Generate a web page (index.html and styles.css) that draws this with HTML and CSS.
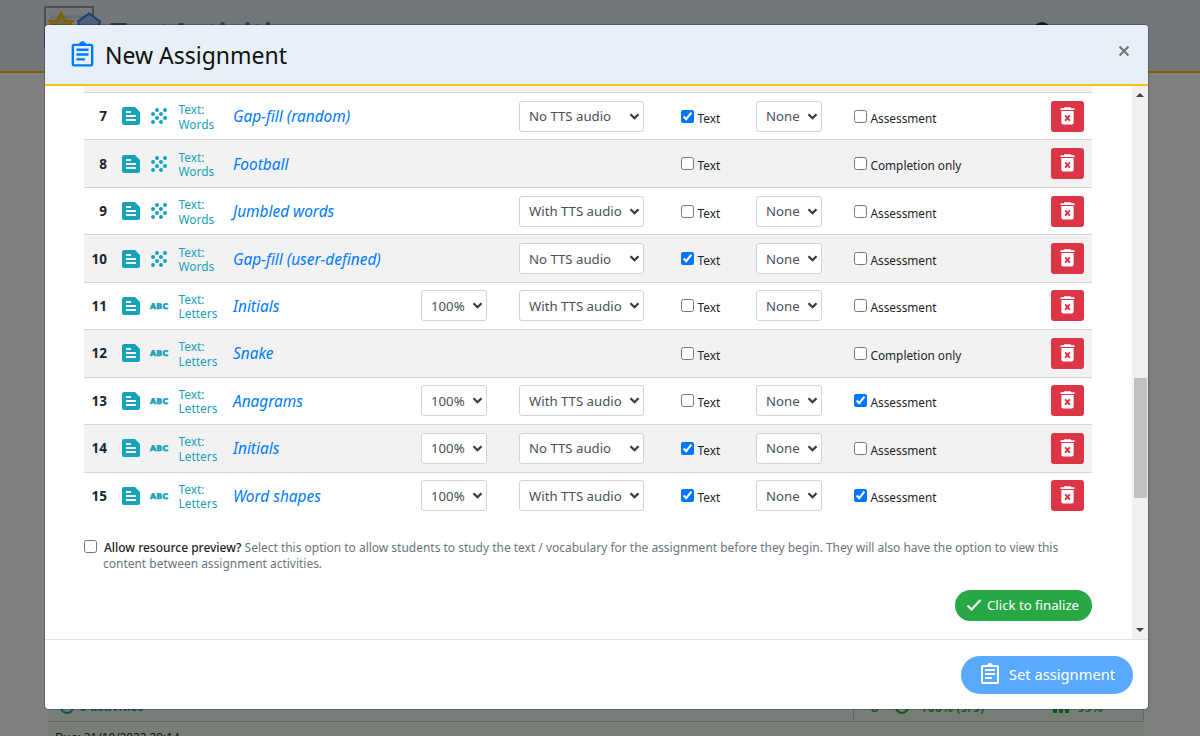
FILE: index.html
```html
<!DOCTYPE html>
<html lang="en">
<head>
  <meta charset="UTF-8">
  <meta name="viewport" content="width=device-width, initial-scale=1.0">
  <title>New Assignment</title>
  <link rel="stylesheet" href="styles.css">
</head>
<body>
  <svg class="sprite">
    <symbol id="clipboard" viewBox="0 0 24 24"><path d="M7 15h7v2H7zm0-4h10v2H7zm0-4h10v2H7zm12-4h-4.18C14.4 1.84 13.3 1 12 1s-2.4.84-2.82 2H5a2 2 0 0 0-2 2v15a2 2 0 0 0 2 2h14a2 2 0 0 0 2-2V5a2 2 0 0 0-2-2zm0 17H5V5h14z"/></symbol>
    <symbol id="feed" viewBox="0 0 24 24"><path d="M16 3H5a2 2 0 0 0-2 2v14a2 2 0 0 0 2 2h14a2 2 0 0 0 2-2V8zM7 7h5v2H7zm10 10H7v-2h10zm0-4H7v-2h10z"/></symbol>
    <symbol id="grain" viewBox="0 0 24 24"><path d="M10 12a2 2 0 1 0 0 4 2 2 0 0 0 0-4zM6 8a2 2 0 1 0 0 4 2 2 0 0 0 0-4zm0 8a2 2 0 1 0 0 4 2 2 0 0 0 0-4zm12-8a2 2 0 1 0 0-4 2 2 0 0 0 0 4zm-4 8a2 2 0 1 0 0 4 2 2 0 0 0 0-4zm4-4a2 2 0 1 0 0 4 2 2 0 0 0 0-4zm-4-4a2 2 0 1 0 0 4 2 2 0 0 0 0-4zm-4-4a2 2 0 1 0 0 4 2 2 0 0 0 0-4z"/></symbol>
    <symbol id="trash" viewBox="0 0 24 24"><path d="M15.500 1.500l1 1H20v2.200H4V2.500h3.500l1-1zM5 5.700h14V19a2 2 0 0 1-2 2H7a2 2 0 0 1-2-2zM10 10l-1.500 1.500 2 2.300-2 2.300 1.500 1.500 2-2.100 2 2.100 1.500-1.500-2-2.300 2-2.300L14 10l-2 2.100z"/></symbol>
  </svg>

  <div class="page">
    <header class="site-header">
      <div class="site-inner">
        <svg class="logo" viewBox="0 0 60 60">
          <rect x="1" y="1" width="48" height="40" fill="#fff" fill-opacity=".3" stroke="#9a9da1" stroke-width="2"/>
          <path d="M6 11h38" stroke="#c9daf0" stroke-width="3"/>
          <path d="M17 7l3.500 7.500 8 .8-6 5.500 1.600 8-7.100-4-7.100 4 1.600-8-6-5.500 8-.8z" fill="#e9cf80" stroke="#ffc107" stroke-width="2.500"/>
          <path d="M45 7.500l11 8-4 13H38l-4-13z" fill="#9cc4f0" stroke="#2f80dd" stroke-width="2"/>
        </svg>
        <span class="site-name">TextActivities</span>
        <span class="user-dot"></span>
      </div>
    </header>
    <div class="results">
      <div class="result-row">
        <span class="result-acts"><i class="ring"></i>9 activities</span>
        <span class="result-score"><b>8</b><i class="ring"></i><b>100% (9/9)</b><i class="bars"></i><b>99%</b></span>
      </div>
      <div class="result-due">Due: 21/10/2022 20:14</div>
    </div>
  </div>

  <div class="backdrop">
    <div class="modal">
      <div class="modal-header">
        <svg class="title-icon"><use href="#clipboard"/></svg>
        <h5>New Assignment</h5>
        <button class="close"><svg viewBox="0 0 12 12"><path d="M1.500 1.500l9 9m0-9l-9 9"/></svg></button>
      </div>
      <div class="modal-main">
        <div class="modal-body">
          <div class="row-tail"></div>
          <div id="activities"></div>
          <div class="preview">
            <input type="checkbox" id="allowPreview">
            <label for="allowPreview"><b>Allow resource preview?</b> Select this option to allow students to study the text / vocabulary for the assignment before they begin. They will also have the option to view this<br>content between assignment activities.</label>
          </div>
          <div class="finalize-row">
            <button class="finalize"><svg viewBox="0 0 16 14"><path d="M1.500 7.500l4 4L14.500 2"/></svg><span>Click to finalize</span></button>
          </div>
        </div>
        <div class="scrollbar">
          <i class="up"></i>
          <i class="thumb"></i>
          <i class="down"></i>
        </div>
      </div>
      <div class="modal-footer">
        <button class="set-btn"><svg><use href="#clipboard"/></svg><span>Set assignment</span></button>
      </div>
    </div>
  </div>

  <script>
    // number, level, name, percent, tts, text checked, assessment checked
    const activities = [
      [7, "Words", "Gap-fill (random)", "", "No TTS audio", true, false],
      [8, "Words", "Football", "", "", false, false],
      [9, "Words", "Jumbled words", "", "With TTS audio", false, false],
      [10, "Words", "Gap-fill (user-defined)", "", "No TTS audio", true, false],
      [11, "Letters", "Initials", "100%", "With TTS audio", false, false],
      [12, "Letters", "Snake", "", "", false, false],
      [13, "Letters", "Anagrams", "100%", "With TTS audio", false, true],
      [14, "Letters", "Initials", "100%", "No TTS audio", true, false],
      [15, "Letters", "Word shapes", "100%", "With TTS audio", true, true]
    ];

    function select(value, size) {
      if (!value) return "<span></span>";
      return `<span class="select ${size}"><select><option>${value}</option></select><svg viewBox="0 0 10 7"><path d="M1 1.200l4 4 4-4"/></svg></span>`;
    }

    function check(label, checked) {
      return `<label class="check"><input type="checkbox" ${checked ? "checked" : ""}><span>${label}</span></label>`;
    }

    document.getElementById("activities").innerHTML = activities.map(([n, level, name, pct, tts, text, assess]) => `
      <div class="activity">
        <b class="num">${n}</b>
        <svg class="icon"><use href="#feed"/></svg>
        ${level === "Words" ? '<svg class="icon"><use href="#grain"/></svg>' : '<span class="abc">ABC</span>'}
        <span class="level"><span>Text:</span><span>${level}</span></span>
        <a class="name">${name}</a>
        ${select(pct, "small")}
        ${select(tts, "wide")}
        ${check("Text", text)}
        ${select(tts ? "None" : "", "small")}
        ${check(tts ? "Assessment" : "Completion only", assess)}
        <button class="delete"><svg><use href="#trash"/></svg></button>
      </div>`).join("");
  </script>
</body>
</html>
```
FILE: styles.css
```css
* { box-sizing: border-box; }
body {
  margin: 0;
  height: 736px;
  overflow: hidden;
  font-family: "Noto Sans", "Open Sans", sans-serif;
  color: #212529;
  background: #fff;
}
button, select { font-family: inherit; }
.sprite { display: none; }

/* page behind the dialog */
.page {
  height: 736px;
  display: flex;
  flex-direction: column;
  justify-content: space-between;
}
.site-header {
  height: 73px;
  background: #e7eff7;
  border-bottom: 2px solid #ffc107;
}
.site-inner {
  display: flex;
  align-items: flex-start;
  padding: 6px 0 0 44px;
}
.logo { width: 60px; height: 60px; }
.site-name {
  margin: 7px 0 0 6px;
  width: 926px;
  font-size: 30px;
  font-weight: 600;
  color: #6c757d;
}
.user-dot {
  width: 18px;
  height: 18px;
  margin-top: 16px;
  margin-left: -3px;
  border-radius: 50%;
  background: #343a40;
}
.results {
  height: 46px;
  margin: 0 56px 0 48px;
  background: #ecfdec;
  font-size: 12.2px;
}
.result-row {
  display: flex;
  justify-content: space-between;
  height: 32px;
  border-bottom: 1px solid #c3d5c4;
  line-height: 34px;
}
.result-acts { padding-left: 12px; color: #17a2b8; font-weight: 600; }
.result-score {
  display: flex;
  align-items: center;
  width: 291px;
  padding: 2px 0 0 17px;
  border-left: 1px solid #c3d5c4;
  border-right: 1px solid #c3d5c4;
  color: #28a745;
}
.result-score .ring { margin: 0 11px 0 17px; }
.result-score b { font-size: 12.7px; font-weight: 600; }
.ring {
  display: inline-block;
  width: 14px;
  height: 14px;
  margin-right: 6px;
  border: 2px solid;
  border-radius: 50%;
  vertical-align: -3px;
}
.bars {
  width: 16px;
  height: 13px;
  margin: 0 8px 0 69px;
  background: repeating-linear-gradient(90deg, #28a745 0 4px, transparent 4px 6px);
}
.result-due { padding: 7px 7px 0; font-size: 11.8px; line-height: 16px; }

.backdrop {
  position: absolute;
  inset: 0;
  padding: 25px 52px 27px 44.5px;
  background: rgba(0, 0, 0, 0.5);
}
.modal {
  display: flex;
  flex-direction: column;
  height: 684px;
  background: #fff;
  border-radius: 4px;
  box-shadow: 0 0 0 1px rgba(0, 0, 0, 0.2);
  overflow: hidden;
}
.modal-header {
  display: flex;
  align-items: center;
  height: 61px;
  padding: 0 17px 0 23.5px;
  background: #e7eff7;
  border-bottom: 2px solid #ffc107;
}
.title-icon { width: 29px; height: 29px; fill: #007bff; }
.modal-header h5 {
  flex: 1;
  margin: 1px 0 0 8px;
  font-size: 23px;
  font-weight: 400;
  line-height: 30px;
  color: #111;
}
.close {
  width: 14px;
  height: 14px;
  margin-top: -7px;
  padding: 1px;
  border: 0;
  background: none;
}
.close svg { display: block; width: 12px; height: 12px; }
.close path { stroke: #74777b; stroke-width: 2.2; }

.modal-main { display: flex; height: 553px; }
.modal-body { flex: 1; padding: 0 40px 0 39.5px; }
.row-tail { height: 6px; background: #f2f2f2; }
.activity {
  display: grid;
  grid-template-columns: 23px 15px 28px 28.5px 54.5px 188px 98px 162px 75px 98px 197px 33px;
  align-items: center;
  height: 47.44px;
  border-top: 1px solid #d3d5d7;
}
.activity:nth-child(even) { background: #f2f2f2; }
.num { font-size: 13.5px; text-align: right; }
.icon:nth-of-type(1) { grid-column: 3; }
.icon { width: 24px; height: 24px; margin-left: -3px; fill: #17a2b8; }
.abc {
  padding-top: 1px;
  font: bold 7.8px "DejaVu Sans", sans-serif;
  letter-spacing: 0.2px;
  color: #17a2b8;
  -webkit-text-stroke: 0.6px #17a2b8;
}
.level {
  display: flex;
  flex-direction: column;
  padding-top: 1px;
  font-size: 11.9px;
  line-height: 14.5px;
  color: #17a2b8;
}
.name { padding-top: 1px; font-size: 15.4px; font-style: italic; color: #007bff; }
.select { position: relative; justify-self: start; height: 31px; }
.select select {
  appearance: none;
  width: 100%;
  height: 31px;
  padding: 0 0 0 9px;
  border: 1px solid #ced4da;
  border-radius: 3px;
  background: #fff;
  color: #495057;
  font-size: 13.2px;
}
.select.small { width: 66px; }
.select.wide { width: 125px; }
.select svg {
  position: absolute;
  right: 4px;
  top: 12px;
  width: 11px;
  height: 7px;
  fill: none;
  stroke: #343a40;
  stroke-width: 2.2;
}
.check { display: flex; align-items: center; font-size: 11.8px; }
.check input { margin: 0 3.5px 0 0; }
.check span { padding-top: 3px; }
.delete {
  width: 33px;
  height: 31px;
  padding: 5px 6px;
  border: 0;
  border-radius: 3px;
  background: #dc3545;
}
.delete svg { display: block; width: 21px; height: 21px; fill: #fff; }

.preview {
  display: flex;
  align-items: flex-start;
  margin-top: 21px;
  font-size: 12px;
  line-height: 16px;
}
.preview input { margin: 0 6px 0 0; }
.preview label { color: #6c757d; letter-spacing: -0.015px; white-space: nowrap; }
.preview b { margin-left: 1px; font-weight: 500; color: #212529; }
.finalize-row { display: flex; justify-content: flex-end; margin-top: 18px; }
.finalize {
  display: flex;
  align-items: center;
  width: 137px;
  height: 31px;
  padding: 0 0 0 11px;
  border: 0;
  border-radius: 16px;
  background: #28a745;
  color: #fff;
  font-size: 13.2px;
}
.finalize svg { width: 16px; height: 14px; margin-right: 5px; fill: none; stroke: #fff; stroke-width: 2.2; }
.scrollbar {
  display: flex;
  flex-direction: column;
  align-items: center;
  width: 16px;
  background: #f1f1f1;
}
.up, .down { border: 4px solid transparent; }
.up { margin-top: 3px; border-bottom-color: #444; }
.down { margin-top: 130px; border-top-color: #444; }
.thumb { width: 13px; height: 120px; margin-top: 281px; background: #c1c1c1; }

.modal-footer {
  display: flex;
  justify-content: flex-end;
  padding: 16px 15px;
  height: 70px;
  border-top: 1px solid #dee2e6;
}
.set-btn {
  display: flex;
  align-items: center;
  width: 172px;
  height: 38px;
  padding: 0 0 2px 17px;
  border: 0;
  border-radius: 19px;
  background: #59a9ff;
  color: #fff;
  font-size: 14.7px;
}
.set-btn svg { width: 24px; height: 24px; margin-right: 7px; fill: #fff; }
```
